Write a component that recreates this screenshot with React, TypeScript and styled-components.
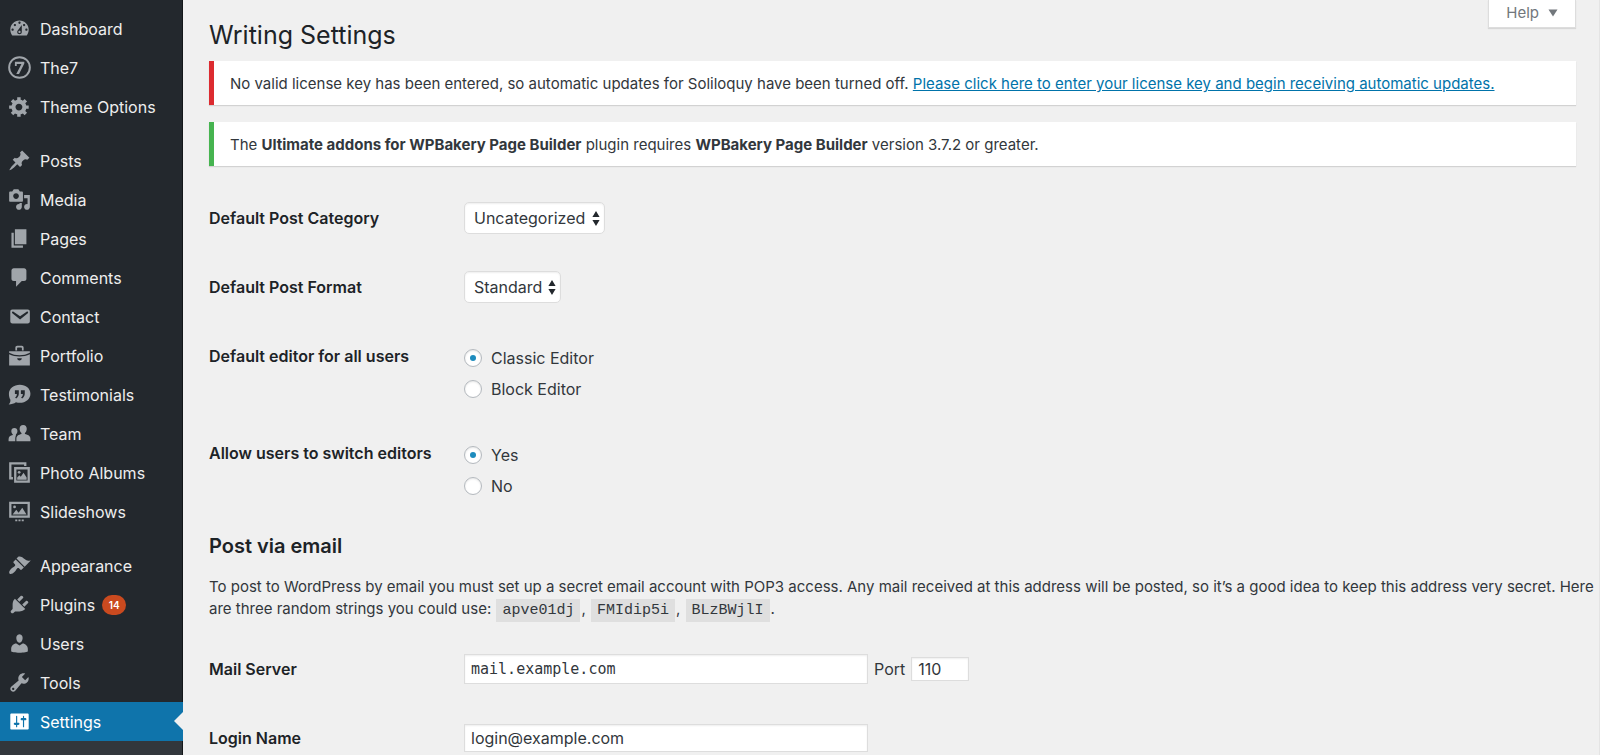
import React, { useState } from "react";
import styled, { createGlobalStyle, css } from "styled-components";

const GlobalStyle = createGlobalStyle`
  *, *::before, *::after { box-sizing: border-box; }
  body {
    margin: 0;
    background: #f0f0f0;
    color: #32373c;
    font-family: Inter, "Liberation Sans", sans-serif;
    font-size: 15px;
    line-height: 22px;
  }
`;

const Page = styled.div`
  display: flex;
  min-height: 100vh;
`;

/* ---------- Sidebar ---------- */

const Sidebar = styled.nav`
  display: flex;
  flex-direction: column;
  flex: 0 0 183px;
  padding-top: 9px;
  background: #23282d;
  border-right: 1px solid #14171a;
`;

const MenuList = styled.ul`
  margin: 0;
  padding: 0;
  list-style: none;
`;

const MenuItem = styled.li<{ $spaced?: boolean }>`
  margin-top: ${(p) => (p.$spaced ? "15px" : "0")};
`;

const MenuLink = styled.a<{ $current?: boolean }>`
  position: relative;
  display: flex;
  align-items: center;
  height: 39px;
  padding-left: 8px;
  margin-right: -1px;
  color: #eee;
  font-size: 16px;
  line-height: 20px;
  text-decoration: none;
  white-space: nowrap;

  svg {
    flex: none;
    margin-right: 9px;
    fill: #a0a5aa;
  }

  ${(p) =>
    p.$current &&
    css`
      background: #0f74ab;
      color: #fff;

      svg {
        fill: #fff;
      }

      &::after {
        content: "";
        position: absolute;
        top: 10px;
        right: 0;
        border: solid transparent;
        border-width: 9px 9px 9px 0;
        border-right-color: #f0f0f0;
      }
    `}
`;

const UpdateCount = styled.span`
  min-width: 24px;
  margin-left: 7px;
  padding: 0 5px;
  border-radius: 10px;
  background: #ca4a1f;
  color: #fff;
  font-size: 10px;
  font-weight: 600;
  line-height: 20px;
  text-align: center;
`;

const SubmenuArea = styled.div`
  flex: 1;
  background: #32373c;
`;

/* ---------- Content ---------- */

const Main = styled.main`
  flex: 1;
  min-width: 0;
  padding: 0 23px 0 26px;
  border-right: 1px solid #e4e4e4;
`;

const Header = styled.header`
  display: flex;
  justify-content: space-between;
  align-items: flex-start;
`;

const Title = styled.h1`
  margin: 0;
  padding: 18px 0 9px;
  color: #1d2327;
  font-size: 25px;
  font-weight: 400;
  line-height: 34px;
`;

const HelpButton = styled.button`
  display: flex;
  align-items: center;
  gap: 9px;
  height: 28px;
  padding: 0 17px 2px;
  border: 1px solid #ddd;
  border-top: 0;
  background: #fff;
  box-shadow: 0 1px 1px rgba(0, 0, 0, 0.1);
  color: #72777c;
  font: inherit;
`;

const Notice = styled.div<{ $accent: string }>`
  margin-bottom: 17px;
  padding: 12px 16px 10px;
  border-left: 5px solid ${(p) => p.$accent};
  background: #fff;
  box-shadow: 0 1px 1px rgba(0, 0, 0, 0.12);

  a {
    color: #0073aa;
  }
`;

const Form = styled.form`
  padding-top: 19px;
`;

const Row = styled.div<{ $top?: boolean }>`
  display: flex;
  align-items: ${(p) => (p.$top ? "flex-start" : "center")};
  min-height: 32px;
  margin-bottom: 37px;

  &:last-child {
    margin-bottom: 0;
  }
`;

const labelText = css`
  flex: 0 0 255px;
  color: #1d2327;
  font-size: 16px;
  font-weight: 600;
`;

const RowLabel = styled.label`
  ${labelText}
`;

const GroupLabel = styled.div`
  ${labelText}
  padding-top: 5px;
`;

const SelectBox = styled.div`
  position: relative;

  svg {
    position: absolute;
    top: 9px;
    right: 5px;
    fill: #23282d;
    pointer-events: none;
  }
`;

const Select = styled.select<{ $width: number }>`
  appearance: none;
  display: block;
  width: ${(p) => p.$width}px;
  height: 32px;
  padding: 0 0 0 9px;
  border: 1px solid #ddd;
  border-radius: 5px;
  background: #fff;
  box-shadow: inset 0 1px 2px rgba(0, 0, 0, 0.07);
  color: #32373c;
  font: inherit;
  font-size: 16px;
`;

const RadioGroup = styled.div`
  display: grid;
  gap: 9px;
  padding-top: 7px;
`;

const RadioLabel = styled.label`
  display: flex;
  align-items: center;
  gap: 9px;
  font-size: 16px;
`;

const Radio = styled.input`
  appearance: none;
  display: grid;
  place-items: center;
  width: 18px;
  height: 18px;
  margin: 0;
  border: 1px solid #b4b9be;
  border-radius: 50%;
  background: #fff;
  box-shadow: inset 0 1px 2px rgba(0, 0, 0, 0.1);

  &:checked::before {
    content: "";
    width: 6px;
    height: 6px;
    border-radius: 50%;
    background: #1e8cbe;
  }
`;

const SectionTitle = styled.h2`
  margin: 0;
  padding-bottom: 18px;
  color: #1d2327;
  font-size: 20px;
  font-weight: 600;
  line-height: 24px;
`;

const Description = styled.p`
  margin: 0 -23px 31px 0;
`;

const Code = styled.code`
  margin: 0 1px;
  padding: 3px 6px;
  background: #dfdfdf;
  font-family: "Liberation Mono", monospace;
  font-size: 15px;
`;

const TextInput = styled.input<{ $mono?: boolean; $height: number; $width?: number }>`
  width: ${(p) => p.$width ?? 404}px;
  height: ${(p) => p.$height}px;
  padding: 0 6px;
  border: 1px solid #ddd;
  border-radius: 0;
  background: #fff;
  box-shadow: inset 0 1px 2px rgba(0, 0, 0, 0.07);
  color: #32373c;
  font-family: ${(p) => (p.$mono ? '"DejaVu Sans Mono", monospace' : "inherit")};
  font-size: ${(p) => (p.$mono ? "15px" : "16px")};
`;

const PortLabel = styled.label`
  display: flex;
  align-items: center;
  gap: 6px;
  margin-left: 6px;
  font-size: 16px;
`;

/* ---------- Icons ---------- */

const MenuIcon = ({ children }: { children: React.ReactNode }) => (
  <svg width="23" height="23" viewBox="0 0 20 20" aria-hidden="true">
    {children}
  </svg>
);

const icons: Record<string, React.ReactNode> = {
  dashboard: (
    <path d="M3.76 16h12.48c1.1-1.37 1.76-3.11 1.76-5 0-4.42-3.58-8-8-8s-8 3.58-8 8c0 1.89.66 3.63 1.76 5zM10 4c.55 0 1 .45 1 1s-.45 1-1 1-1-.45-1-1 .45-1 1-1zM6 6c.55 0 1 .45 1 1s-.45 1-1 1-1-.45-1-1 .45-1 1-1zm8 0c.55 0 1 .45 1 1s-.45 1-1 1-1-.45-1-1 .45-1 1-1zm-5.37 5.55L12 7v6c0 1.1-.9 2-2 2s-2-.9-2-2c0-.57.24-1.08.63-1.45zM4 10c.55 0 1 .45 1 1s-.45 1-1 1-1-.45-1-1 .45-1 1-1zm12 0c.55 0 1 .45 1 1s-.45 1-1 1-1-.45-1-1 .45-1 1-1zm-5 3c0-.55-.45-1-1-1s-1 .45-1 1 .45 1 1 1 1-.45 1-1z" />
  ),
  the7: (
    <>
      <circle cx="10" cy="10" r="9" fill="none" stroke="#a0a5aa" strokeWidth="1.7" />
      <path d="M6 5h8.2v1.6L9.6 15.6H7.2L11.7 7H7.6v1.6H6z" />
    </>
  ),
  gear: (
    <path d="M18 12h-2.18c-.17.7-.44 1.35-.81 1.93l1.54 1.54-2.1 2.1-1.54-1.54c-.58.36-1.23.63-1.91.79V19H8v-2.18c-.68-.16-1.33-.43-1.91-.79l-1.54 1.54-2.12-2.12 1.54-1.54c-.36-.58-.63-1.23-.79-1.91H1V9.03h2.17c.16-.7.44-1.35.8-1.94L2.43 5.55l2.1-2.1 1.54 1.54c.58-.37 1.24-.64 1.93-.81V2h3v2.18c.68.16 1.33.43 1.91.79l1.54-1.54 2.12 2.12-1.54 1.54c.36.59.64 1.24.8 1.94H18V12zm-8.5 1.5c1.66 0 3-1.34 3-3s-1.34-3-3-3-3 1.34-3 3 1.34 3 3 3z" />
  ),
  pin: (
    <path d="M10.44 3.02l1.82-1.82 6.36 6.35-1.83 1.82c-1.05-.68-2.48-.57-3.41.36l-.75.75c-.92.93-1.04 2.35-.35 3.41l-1.83 1.82-2.41-2.41-2.8 2.79c-.42.42-3.38 2.71-3.8 2.29s1.86-3.39 2.28-3.81l2.79-2.79L4.1 9.36l1.83-1.82c1.05.69 2.48.57 3.4-.36l.75-.75c.93-.92 1.05-2.35.36-3.41z" />
  ),
  media: (
    <path d="M13 11V4c0-.55-.45-1-1-1h-1.67L9 1H5L3.67 3H2c-.55 0-1 .45-1 1v7c0 .55.45 1 1 1h10c.55 0 1-.45 1-1zM7 4.5c1.38 0 2.5 1.12 2.5 2.5S8.38 9.5 7 9.5 4.5 8.38 4.5 7 5.62 4.5 7 4.5zM14 6h5v10.5c0 1.38-1.12 2.5-2.5 2.5S14 17.88 14 16.5s1.12-2.5 2.5-2.5c.17 0 .34.02.5.05V9h-3V6zm-4 8.05V13h2v3.5c0 1.38-1.12 2.5-2.5 2.5S7 17.88 7 16.5 8.12 14 9.5 14c.17 0 .34.02.5.05z" />
  ),
  pages: <path d="M6 15V2h10v13H6zm-1 1h8v2H3V5h2v11z" />,
  comments: (
    <path d="M5 2h9c1.1 0 2 .9 2 2v7c0 1.1-.9 2-2 2h-2l-5 5v-5H5c-1.1 0-2-.9-2-2V4c0-1.1.9-2 2-2z" />
  ),
  email: (
    <path d="M3.87 4h13.25C18.37 4 19 4.59 19 5.79v8.42c0 1.19-.63 1.79-1.88 1.79H3.87c-1.25 0-1.88-.6-1.88-1.79V5.79c0-1.2.63-1.79 1.88-1.79zm6.62 8.6l6.74-5.53c.24-.2.43-.66.13-1.07-.29-.41-.82-.42-1.17-.17l-5.7 3.86L4.8 5.83c-.35-.25-.88-.24-1.17.17-.3.41-.11.87.13 1.07z" />
  ),
  portfolio: (
    <>
      <path d="M6.4 5.6V3.2c0-1 .6-1.7 1.6-1.7h4c1 0 1.6.7 1.6 1.7v2.4h-1.5V3.7c0-.5-.2-.7-.6-.7h-3c-.4 0-.6.2-.6.7v1.9z" />
      <path d="M1 6.2h18v1.3c-2.7 1.5-5.8 2.2-9 2.2s-6.3-.7-9-2.2z" />
      <path d="M1 9c2.7 1.3 5.7 1.9 9 1.9s6.3-.6 9-1.9v9.600H1zm7 3.400c0 1.100.8 1.900 2 1.900s2-.8 2-1.900z" />
    </>
  ),
  testimonials: (
    <path
      fillRule="evenodd"
      d="M10.300 1.500c5.200 0 9.200 3.300 9.200 7.800s-4 7.900-9.200 7.900c-1.200 0-2.300-.2-3.400-.5C5.300 17.900 3.100 18.600.6 18.600c1-.9 1.600-2.300 1.500-4C1.200 13.200.8 11.300.8 9.300c0-4.500 4.300-7.800 9.500-7.800zM6 6.300v3.300h1.700c0 1.300-.4 2.300-1.500 3.100l.9.700c1.500-1 2.300-2.500 2.300-4.300V6.300zm5.200 0v3.300h1.700c0 1.300-.4 2.300-1.500 3.100l.9.700c1.500-1 2.300-2.500 2.300-4.300V6.300z"
    />
  ),
  team: (
    <>
      <path d="M13.200 2.600c2 0 3.100 1.400 3.100 3.200 0 1.600-.6 3-1.600 3.800v.9c2.700.7 4.800 1.600 4.800 4.200v2.100H7.300v-2.100c0-2.600 1.800-3.500 4.400-4.200v-.9c-1-.8-1.600-2.200-1.600-3.800 0-1.800 1.100-3.200 3.100-3.200z" />
      <path d="M5.600 5.200c1.600 0 2.600 1.100 2.600 2.600 0 1.200-.5 2.300-1.300 3v.5C6.900 12 6.300 12.900 6.300 14.500v2.300H.5v-1.900c0-2.100 1.500-2.900 3.700-3.500v-.6c-.8-.7-1.300-1.800-1.300-3 0-1.500 1-2.600 2.700-2.600z" />
    </>
  ),
  albums: (
    <>
      <path d="M1 1h15v3.300h-2V3H3v11h1.300v2H1z" />
      <path fillRule="evenodd" d="M5.300 5.300H19V19H5.300zm2 2V17H17V7.300z" />
      <path d="M8 16.300v-2l1.900-1.900 1.200 1.200 2.400-3.400 2.700 4.200v1.900z" />
      <circle cx="9.7" cy="9.8" r="1.2" />
    </>
  ),
  slideshow: (
    <>
      <path fillRule="evenodd" d="M1 1.500h18v14H1zm2 2v10h14v-10z" />
      <path d="M4 12.700l3.200-4.200 2 2.500 3.200-4.200 3.700 5.900z" />
      <circle cx="5.7" cy="6" r="1.2" />
      <path d="M6.300 16.900h1.800v1.600H6.300zM9.100 16.900h1.800v1.600H9.100zM11.900 16.900h1.800v1.600h-1.800z" />
    </>
  ),
  appearance: (
    <path d="M14.48 11.06L7.41 3.99l1.5-1.5c.5-.56 2.3-.47 3.51.32 1.21.8 1.43 1.28 2.91 2.1 1.18.64 2.45 1.26 4.45.85zm-.71.71L6.7 4.7 4.93 6.47c-.39.39-.39 1.02 0 1.41l1.06 1.06c.39.39.39 1.03 0 1.42-.6.6-1.43 1.11-2.21 1.69-.35.26-.7.53-1.01.84C1.43 14.23.4 16.08 1.4 17.07c.99 1 2.84-.03 4.18-1.36.31-.31.58-.66.85-1.02.57-.78 1.08-1.61 1.69-2.21.39-.39 1.02-.39 1.41 0l1.06 1.06c.39.39 1.02.39 1.41 0z" />
  ),
  plugins: (
    <path d="M13.11 4.36L9.87 7.6 8 5.73l3.24-3.24c.35-.34 1.05-.2 1.56.32.52.51.66 1.21.31 1.55zm-8 1.77l.91-1.12 9.01 9.01-1.19.84c-.71.71-2.63 1.16-3.82 1.16H6.14L4.9 17.26c-.59.59-1.54.59-2.12 0-.59-.58-.59-1.53 0-2.12l1.24-1.24v-3.88c0-1.13.4-3.19 1.09-3.89zm7.26 3.97l3.24-3.24c.34-.35 1.04-.21 1.55.31.52.51.66 1.21.31 1.55l-3.24 3.25z" />
  ),
  users: (
    <path d="M10 9.25c-2.27 0-2.73-3.44-2.73-3.44C7 4.02 7.82 2 9.97 2c2.16 0 2.98 2.02 2.71 3.81 0 0-.41 3.44-2.68 3.44zm0 2.57L12.72 10c2.39 0 4.52 2.33 4.52 4.53v2.49s-3.65 1.13-7.24 1.13c-3.65 0-7.24-1.13-7.24-1.13v-2.49c0-2.25 1.94-4.48 4.47-4.48z" />
  ),
  tools: (
    <path d="M16.68 9.77c-1.34 1.34-3.3 1.67-4.95.99l-5.41 6.52c-.99.99-2.59.99-3.58 0s-.99-2.59 0-3.57l6.52-5.42c-.68-1.65-.35-3.61.99-4.95 1.28-1.28 3.12-1.62 4.72-1.06l-2.89 2.89 2.82 2.82 2.86-2.87c.53 1.58.18 3.39-1.08 4.65zM3.81 16.21c.4.39 1.04.39 1.43 0 .4-.4.4-1.04 0-1.43-.39-.4-1.03-.4-1.43 0-.39.39-.39 1.03 0 1.43z" />
  ),
  settings: (
    <path d="M18 16V4c0-.55-.45-1-1-1H3c-.55 0-1 .45-1 1v12c0 .55.45 1 1 1h14c.55 0 1-.45 1-1zM8 11h1c.55 0 1 .45 1 1s-.45 1-1 1H8v1.5c0 .28-.22.5-.5.5s-.5-.22-.5-.5V13H6c-.55 0-1-.45-1-1s.45-1 1-1h1V5.5c0-.28.22-.5.5-.5s.5.22.5.5V11zm5-2h-1c-.55 0-1-.45-1-1s.45-1 1-1h1V5.5c0-.28.22-.5.5-.5s.5.22.5.5V7h1c.55 0 1 .45 1 1s-.45 1-1 1h-1v5.5c0 .28-.22.5-.5.5s-.5-.22-.5-.5V9z" />
  ),
};

const SelectArrows = () => (
  <svg width="8" height="15" viewBox="0 0 8 15" aria-hidden="true">
    <path d="M4 0l3.600 6H.4zM4 15L.4 9h7.200z" />
  </svg>
);

/* ---------- Data ---------- */

type MenuEntry = { label: string; icon: string; spaced?: boolean; count?: number; current?: boolean };

const menu: MenuEntry[] = [
  { label: "Dashboard", icon: "dashboard" },
  { label: "The7", icon: "the7" },
  { label: "Theme Options", icon: "gear" },
  { label: "Posts", icon: "pin", spaced: true },
  { label: "Media", icon: "media" },
  { label: "Pages", icon: "pages" },
  { label: "Comments", icon: "comments" },
  { label: "Contact", icon: "email" },
  { label: "Portfolio", icon: "portfolio" },
  { label: "Testimonials", icon: "testimonials" },
  { label: "Team", icon: "team" },
  { label: "Photo Albums", icon: "albums" },
  { label: "Slideshows", icon: "slideshow" },
  { label: "Appearance", icon: "appearance", spaced: true },
  { label: "Plugins", icon: "plugins", count: 14 },
  { label: "Users", icon: "users" },
  { label: "Tools", icon: "tools" },
  { label: "Settings", icon: "settings", current: true },
];

type RadioRowProps = { id: string; label: string; options: string[] };

const RadioRow = ({ id, label, options }: RadioRowProps) => {
  const [value, setValue] = useState(options[0]);
  return (
    <Row $top>
      <GroupLabel id={id}>{label}</GroupLabel>
      <RadioGroup role="radiogroup" aria-labelledby={id}>
        {options.map((option) => (
          <RadioLabel key={option}>
            <Radio type="radio" name={id} checked={value === option} onChange={() => setValue(option)} />
            {option}
          </RadioLabel>
        ))}
      </RadioGroup>
    </Row>
  );
};

export default function App() {
  return (
    <>
      <GlobalStyle />
      <Page>
        <Sidebar aria-label="Main menu">
          <MenuList>
            {menu.map((item) => (
              <MenuItem key={item.label} $spaced={item.spaced}>
                <MenuLink href="#" $current={item.current} aria-current={item.current ? "page" : undefined}>
                  <MenuIcon>{icons[item.icon]}</MenuIcon>
                  {item.label}
                  {item.count && <UpdateCount>{item.count}</UpdateCount>}
                </MenuLink>
              </MenuItem>
            ))}
          </MenuList>
          <SubmenuArea />
        </Sidebar>

        <Main>
          <Header>
            <Title>Writing Settings</Title>
            <HelpButton type="button">
              Help
              <svg width="10" height="8" viewBox="0 0 10 8" fill="#72777c" aria-hidden="true">
                <path d="M.5.5h9L5 7.500z" />
              </svg>
            </HelpButton>
          </Header>

          <Notice $accent="#dc2b30">
            No valid license key has been entered, so automatic updates for Soliloquy have been turned off.{" "}
            <a href="#">Please click here to enter your license key and begin receiving automatic updates.</a>
          </Notice>
          <Notice $accent="#46b450">
            The <strong>Ultimate addons for WPBakery Page Builder</strong> plugin requires{" "}
            <strong>WPBakery Page Builder</strong> version 3.7.2 or greater.
          </Notice>

          <Form>
            <Row>
              <RowLabel htmlFor="category">Default Post Category</RowLabel>
              <SelectBox>
                <Select id="category" $width={141}>
                  <option>Uncategorized</option>
                </Select>
                <SelectArrows />
              </SelectBox>
            </Row>
            <Row>
              <RowLabel htmlFor="format">Default Post Format</RowLabel>
              <SelectBox>
                <Select id="format" $width={97}>
                  <option>Standard</option>
                </Select>
                <SelectArrows />
              </SelectBox>
            </Row>
            <RadioRow id="default-editor" label="Default editor for all users" options={["Classic Editor", "Block Editor"]} />
            <RadioRow id="switch-editors" label="Allow users to switch editors" options={["Yes", "No"]} />

            <SectionTitle>Post via email</SectionTitle>
            <Description>
              To post to WordPress by email you must set up a secret email account with POP3 access. Any mail received at
              this address will be posted, so it’s a good idea to keep this address very secret. Here are three random
              strings you could use: <Code>apve01dj</Code>, <Code>FMIdip5i</Code>, <Code>BLzBWjlI</Code>.
            </Description>

            <Row>
              <RowLabel htmlFor="mail-server">Mail Server</RowLabel>
              <TextInput id="mail-server" type="text" defaultValue="mail.example.com" $mono $height={30} />
              <PortLabel>
                Port
                <TextInput type="text" defaultValue="110" $height={24} $width={58} />
              </PortLabel>
            </Row>
            <Row>
              <RowLabel htmlFor="login-name">Login Name</RowLabel>
              <TextInput id="login-name" type="text" defaultValue="login@example.com" $height={28} />
            </Row>
          </Form>
        </Main>
      </Page>
    </>
  );
}
